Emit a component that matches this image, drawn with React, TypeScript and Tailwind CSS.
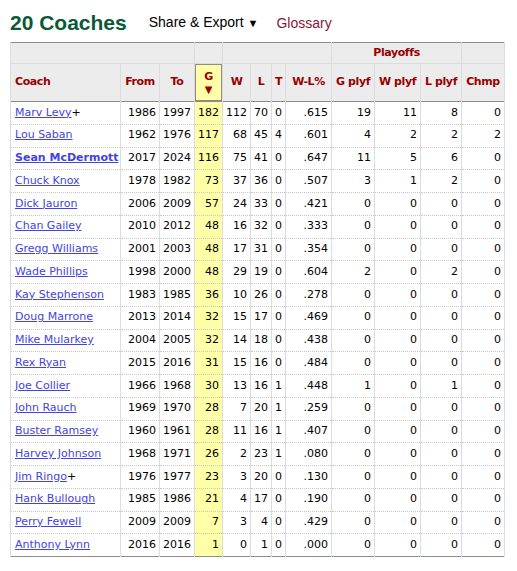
import React from 'react';

type Coach = {
  name: string;
  hof?: boolean;
  active?: boolean;
  from: number;
  to: number;
  g: number;
  w: number;
  l: number;
  t: number;
  pct: string;
  gp: number;
  wp: number;
  lp: number;
  chmp: number;
};

const coaches: Coach[] = [
  { name: 'Marv Levy', hof: true, from: 1986, to: 1997, g: 182, w: 112, l: 70, t: 0, pct: '.615', gp: 19, wp: 11, lp: 8, chmp: 0 },
  { name: 'Lou Saban', from: 1962, to: 1976, g: 117, w: 68, l: 45, t: 4, pct: '.601', gp: 4, wp: 2, lp: 2, chmp: 2 },
  { name: 'Sean McDermott', active: true, from: 2017, to: 2024, g: 116, w: 75, l: 41, t: 0, pct: '.647', gp: 11, wp: 5, lp: 6, chmp: 0 },
  { name: 'Chuck Knox', from: 1978, to: 1982, g: 73, w: 37, l: 36, t: 0, pct: '.507', gp: 3, wp: 1, lp: 2, chmp: 0 },
  { name: 'Dick Jauron', from: 2006, to: 2009, g: 57, w: 24, l: 33, t: 0, pct: '.421', gp: 0, wp: 0, lp: 0, chmp: 0 },
  { name: 'Chan Gailey', from: 2010, to: 2012, g: 48, w: 16, l: 32, t: 0, pct: '.333', gp: 0, wp: 0, lp: 0, chmp: 0 },
  { name: 'Gregg Williams', from: 2001, to: 2003, g: 48, w: 17, l: 31, t: 0, pct: '.354', gp: 0, wp: 0, lp: 0, chmp: 0 },
  { name: 'Wade Phillips', from: 1998, to: 2000, g: 48, w: 29, l: 19, t: 0, pct: '.604', gp: 2, wp: 0, lp: 2, chmp: 0 },
  { name: 'Kay Stephenson', from: 1983, to: 1985, g: 36, w: 10, l: 26, t: 0, pct: '.278', gp: 0, wp: 0, lp: 0, chmp: 0 },
  { name: 'Doug Marrone', from: 2013, to: 2014, g: 32, w: 15, l: 17, t: 0, pct: '.469', gp: 0, wp: 0, lp: 0, chmp: 0 },
  { name: 'Mike Mularkey', from: 2004, to: 2005, g: 32, w: 14, l: 18, t: 0, pct: '.438', gp: 0, wp: 0, lp: 0, chmp: 0 },
  { name: 'Rex Ryan', from: 2015, to: 2016, g: 31, w: 15, l: 16, t: 0, pct: '.484', gp: 0, wp: 0, lp: 0, chmp: 0 },
  { name: 'Joe Collier', from: 1966, to: 1968, g: 30, w: 13, l: 16, t: 1, pct: '.448', gp: 1, wp: 0, lp: 1, chmp: 0 },
  { name: 'John Rauch', from: 1969, to: 1970, g: 28, w: 7, l: 20, t: 1, pct: '.259', gp: 0, wp: 0, lp: 0, chmp: 0 },
  { name: 'Buster Ramsey', from: 1960, to: 1961, g: 28, w: 11, l: 16, t: 1, pct: '.407', gp: 0, wp: 0, lp: 0, chmp: 0 },
  { name: 'Harvey Johnson', from: 1968, to: 1971, g: 26, w: 2, l: 23, t: 1, pct: '.080', gp: 0, wp: 0, lp: 0, chmp: 0 },
  { name: 'Jim Ringo', hof: true, from: 1976, to: 1977, g: 23, w: 3, l: 20, t: 0, pct: '.130', gp: 0, wp: 0, lp: 0, chmp: 0 },
  { name: 'Hank Bullough', from: 1985, to: 1986, g: 21, w: 4, l: 17, t: 0, pct: '.190', gp: 0, wp: 0, lp: 0, chmp: 0 },
  { name: 'Perry Fewell', from: 2009, to: 2009, g: 7, w: 3, l: 4, t: 0, pct: '.429', gp: 0, wp: 0, lp: 0, chmp: 0 },
  { name: 'Anthony Lynn', from: 2016, to: 2016, g: 1, w: 0, l: 1, t: 0, pct: '.000', gp: 0, wp: 0, lp: 0, chmp: 0 },
];

const th = 'border-x border-[#dcdcdc] font-bold text-[#990000] whitespace-nowrap tracking-[-0.4px]';
const td = 'border-x border-[#dcdcdc] text-right px-[3px] py-0';

export default function App() {
  return (
    <div className="bg-white w-[517px] h-[571px] px-[10px] pt-[11px] font-['DejaVu_Sans',Verdana,sans-serif]">
      <div className="flex items-start mb-[7px] font-['Liberation_Sans',Arial,sans-serif]">
        <h2 className="text-[21px] leading-[24px] font-bold text-[#0b5a36]">20 Coaches</h2>
        <span className="ml-[22px] mt-[3px] text-[14px] leading-[16px] text-black">
          Share &amp; Export <span className="text-[11px]">▼</span>
        </span>
        <span className="ml-[18px] mt-[4px] text-[14px] leading-[16px] text-[#8b1538]">Glossary</span>
      </div>

      <table className="table-fixed border-collapse w-[494px] border border-[#8c8c8c] text-[11px] text-black">
        <colgroup>
          <col className="w-[110px]" />
          <col className="w-[39px]" />
          <col className="w-[35px]" />
          <col className="w-[28px]" />
          <col className="w-[28px]" />
          <col className="w-[21px]" />
          <col className="w-[14px]" />
          <col className="w-[46px]" />
          <col className="w-[43px]" />
          <col className="w-[46px]" />
          <col className="w-[41px]" />
          <col className="w-[43px]" />
        </colgroup>
        <thead className="bg-[#ececec]">
          <tr className="h-[21px] border-b border-[#dcdcdc]">
            <th colSpan={3} className={th}></th>
            <th className={th}></th>
            <th colSpan={4} className={th}></th>
            <th colSpan={3} className={`${th} text-center`}>Playoffs</th>
            <th className={th}></th>
          </tr>
          <tr className="h-[38px] border-b border-[#8c8c8c]">
            <th className={`${th} text-left pl-[4px]`}>Coach</th>
            <th className={`${th} text-center`}>From</th>
            <th className={`${th} text-center`}>To</th>
            <th className={`${th} text-center bg-[#ffffa8] shadow-[inset_0_0_0_1px_#8c8c8c] leading-[13px]`}>
              G
              <br />
              <span className="text-[10px]">▼</span>
            </th>
            <th className={`${th} text-center`}>W</th>
            <th className={`${th} text-center`}>L</th>
            <th className={`${th} text-center`}>T</th>
            <th className={`${th} text-center`}>W-L%</th>
            <th className={`${th} text-center`}>G plyf</th>
            <th className={`${th} text-center`}>W plyf</th>
            <th className={`${th} text-center`}>L plyf</th>
            <th className={`${th} text-center`}>Chmp</th>
          </tr>
        </thead>
        <tbody>
          {coaches.map((c, i) => (
            <tr
              key={c.name}
              className={`h-[22.75px] ${i < coaches.length - 1 ? 'border-b border-dotted border-[#c8c8c8]' : ''}`}
            >
              <td className="border-x border-[#dcdcdc] text-left pl-[4px] pr-0 py-0 whitespace-nowrap">
                <a href="#" className={`underline text-[#4343e3] ${c.active ? 'font-bold' : ''}`}>
                  {c.name}
                </a>
                {c.hof && <span>+</span>}
              </td>
              <td className={td}>{c.from}</td>
              <td className={td}>{c.to}</td>
              <td className={`${td} bg-[#ffffa8]`}>{c.g}</td>
              <td className={td}>{c.w}</td>
              <td className={td}>{c.l}</td>
              <td className={td}>{c.t}</td>
              <td className={td}>{c.pct}</td>
              <td className={td}>{c.gp}</td>
              <td className={td}>{c.wp}</td>
              <td className={td}>{c.lp}</td>
              <td className={td}>{c.chmp}</td>
            </tr>
          ))}
        </tbody>
      </table>
    </div>
  );
}
